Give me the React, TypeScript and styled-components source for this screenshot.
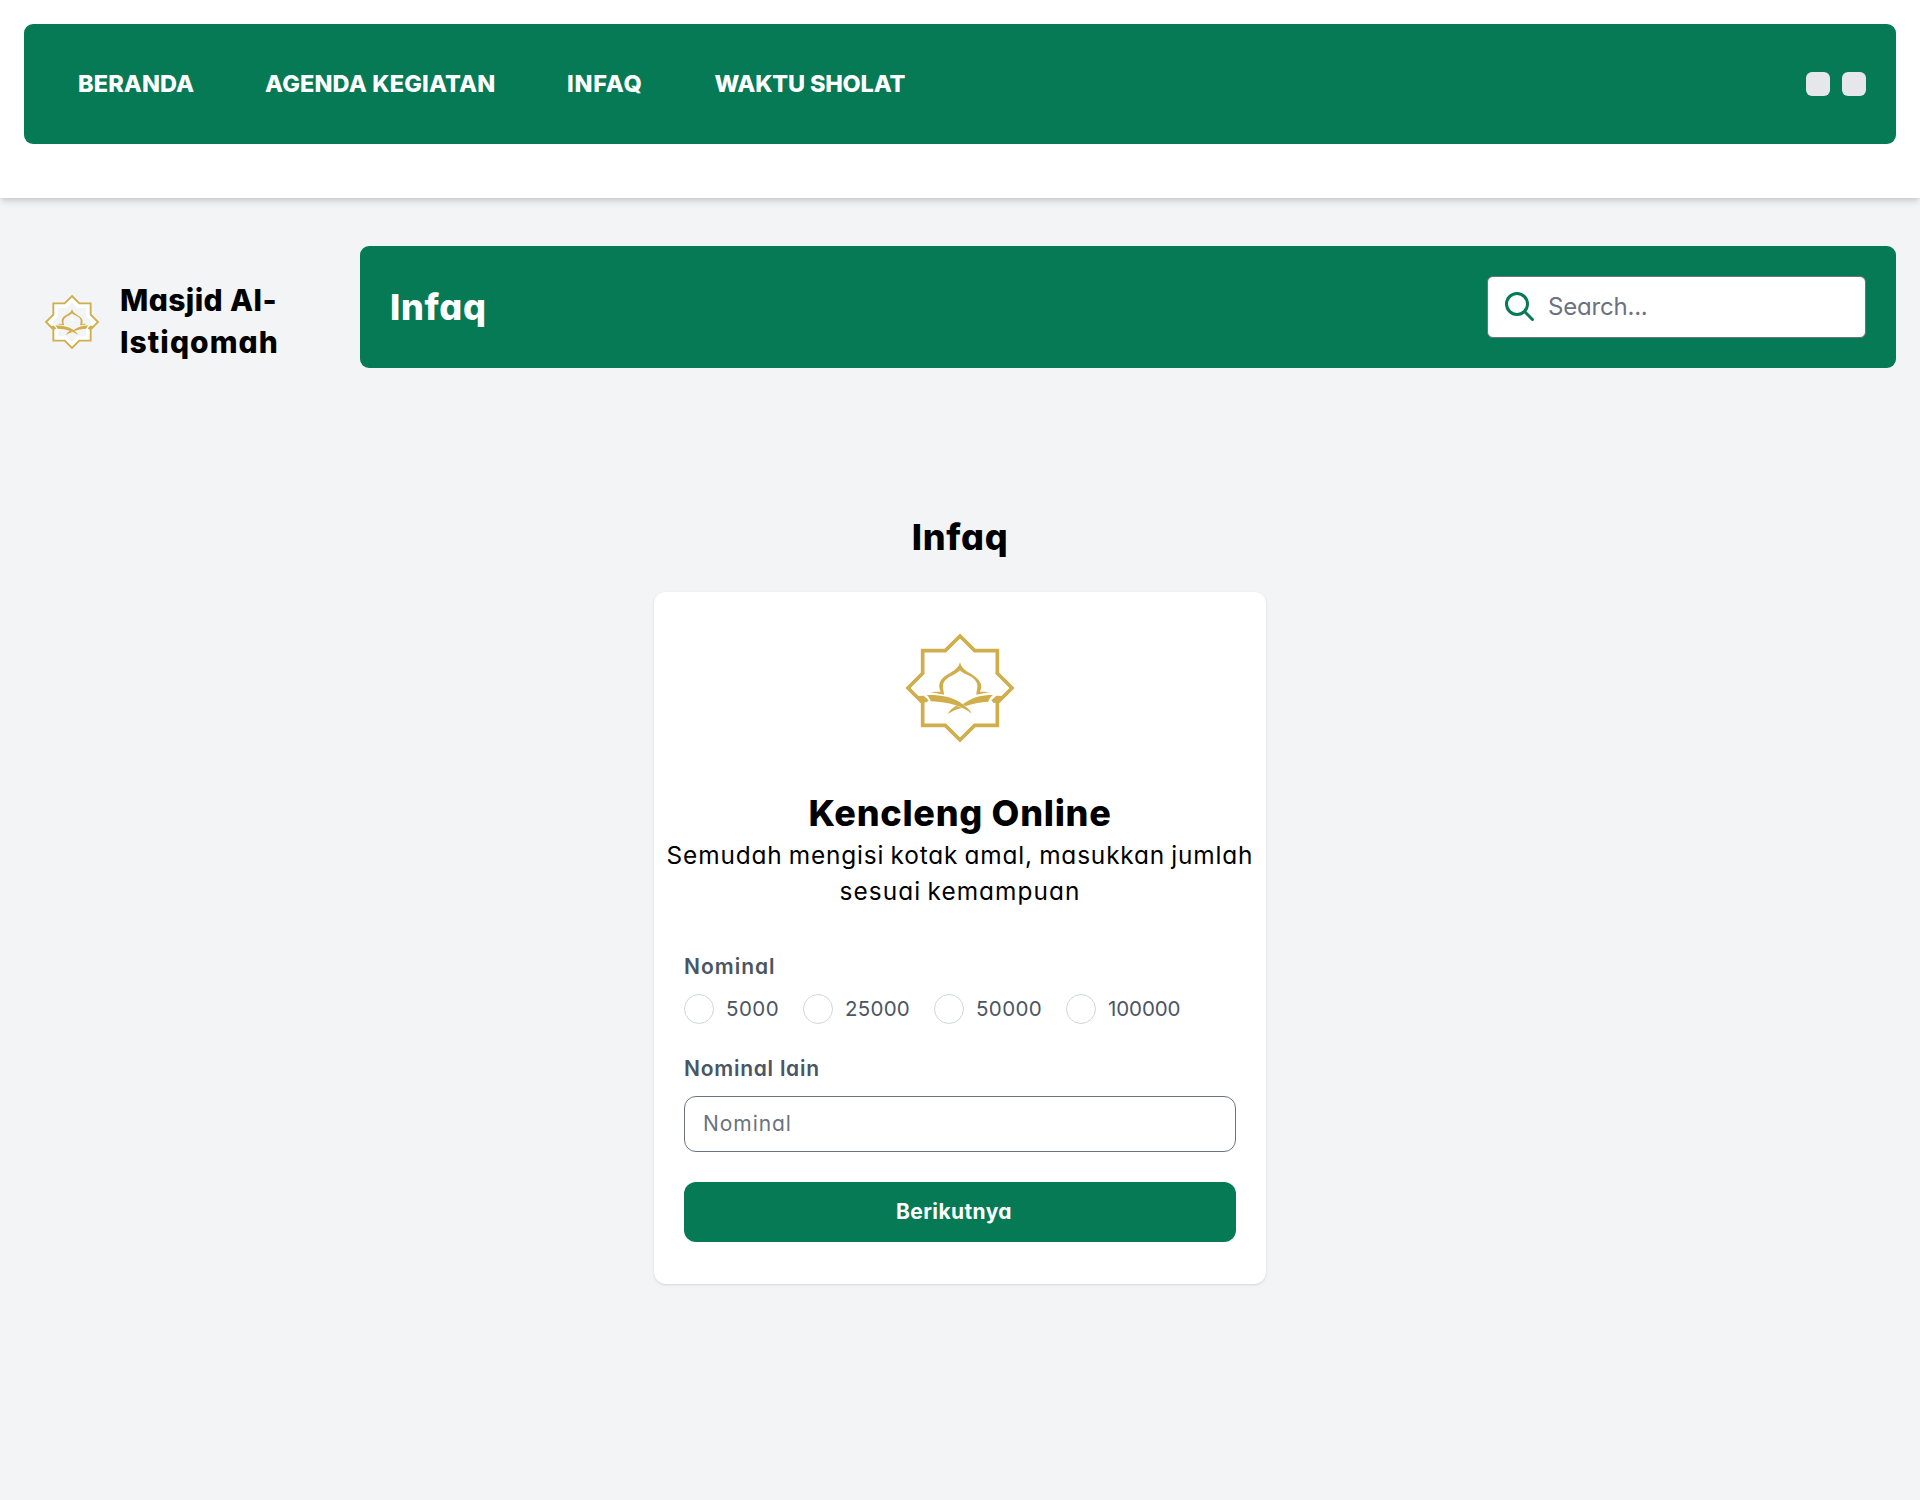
import React from "react";
import styled, { createGlobalStyle } from "styled-components";

const green = "#057a55";
const gold = "#d0ae4c";

const GlobalStyle = createGlobalStyle`
  *, *::before, *::after { box-sizing: border-box; }
  body {
    margin: 0;
    background: #f3f4f6;
    color: #000;
    font-family: Inter, "Open Sans", sans-serif;
    font-feature-settings: "cv11";
    font-size: 24px;
    line-height: 36px;
  }
  h1, h2, p { margin: 0; }
`;

const Page = styled.div`
  min-height: 1500px;
  background: #f3f4f6;
`;

const Header = styled.header`
  height: 198px;
  padding: 24px;
  background: #fff;
  box-shadow: 0 4px 6px -1px rgba(0, 0, 0, 0.1), 0 2px 4px -2px rgba(0, 0, 0, 0.1),
    0 6px 9px -1px rgba(0, 0, 0, 0.04);
`;

const NavBar = styled.nav`
  display: flex;
  align-items: center;
  justify-content: space-between;
  height: 120px;
  padding: 0 30px 0 54px;
  border-radius: 9px;
  background: ${green};
`;

const NavList = styled.div`
  display: flex;
  gap: 72px;
`;

const NavLink = styled.a<{ $width: number; $tracking: number }>`
  width: ${(p) => p.$width}px;
  color: #fff;
  font-size: 23.5px;
  font-weight: 800;
  letter-spacing: ${(p) => p.$tracking}px;
  white-space: nowrap;
`;

const Actions = styled.div`
  display: flex;
  gap: 12px;
`;

const ActionButton = styled.button`
  width: 24px;
  height: 24px;
  padding: 0;
  border: 0;
  border-radius: 6px;
  background: #e5e7eb;
`;

const TopRow = styled.div`
  display: flex;
  align-items: flex-start;
  padding: 48px 24px 0 36px;
`;

const Brand = styled.div`
  display: flex;
  align-items: center;
  gap: 12px;
  width: 324px;
  padding-top: 33px;
`;

const BrandName = styled.div`
  display: flex;
  flex-direction: column;
  padding-bottom: 2px;
  font-size: 30px;
  font-weight: 800;
  line-height: 42px;
`;

const Tracked = styled.span<{ $tracking: number }>`
  letter-spacing: ${(p) => p.$tracking}px;
  white-space: nowrap;
`;

const Lead = styled(Tracked)`
  font-size: 24.4px;
  word-spacing: -1.5px;
`;

const TitleBar = styled.div`
  display: flex;
  flex: 1;
  align-items: center;
  justify-content: space-between;
  height: 122px;
  padding: 0 30px;
  border-radius: 9px;
  background: ${green};
`;

const BarTitle = styled.h1`
  color: #fff;
  font-size: 36px;
  font-weight: 800;
  line-height: 48px;
  letter-spacing: 0.7px;
`;

const SearchBox = styled.label`
  display: flex;
  align-items: center;
  gap: 10px;
  width: 379px;
  height: 62px;
  padding: 0 14px;
  border: 1px solid #6b7280;
  border-radius: 6px;
  background: #fff;
`;

const SearchInput = styled.input`
  flex: 1;
  min-width: 0;
  padding: 0;
  border: 0;
  outline: 0;
  background: none;
  font: inherit;
  font-feature-settings: "cv11";
  letter-spacing: -0.2px;
  &::placeholder { color: #6b7280; opacity: 1; }
`;

const Main = styled.main`
  display: flex;
  flex-direction: column;
  align-items: center;
  gap: 30px;
  padding-top: 145px;
`;

const SectionTitle = styled.h2`
  font-size: 36px;
  font-weight: 800;
  line-height: 49px;
  letter-spacing: 0.7px;
`;

const Card = styled.section`
  width: 612px;
  height: 692px;
  padding-top: 24px;
  border-radius: 12px;
  background: #fff;
  box-shadow: 0 1px 3px rgba(0, 0, 0, 0.1), 0 1px 2px -1px rgba(0, 0, 0, 0.1);
`;

const Intro = styled.div`
  display: flex;
  flex-direction: column;
  align-items: center;
`;

const CardTitle = styled.h2`
  margin-top: 29px;
  font-size: 36px;
  font-weight: 800;
  line-height: 48px;
  letter-spacing: 0.72px;
`;

const Form = styled.form`
  display: flex;
  flex-direction: column;
  gap: 30px;
  padding: 43px 30px 42px;
`;

const Field = styled.div`
  display: flex;
  flex-direction: column;
  gap: 12px;
`;

const FieldLabel = styled.div<{ $tracking: number }>`
  color: #4b5563;
  font-size: 21px;
  font-weight: 600;
  line-height: 30px;
  letter-spacing: ${(p) => p.$tracking}px;
`;

const Options = styled.div`
  display: flex;
  gap: 24px;
`;

const Option = styled.label<{ $width: number; $tracking: number }>`
  display: flex;
  align-items: center;
  gap: 12px;
  width: ${(p) => p.$width}px;
  color: #4b5563;
  font-size: 20.5px;
  line-height: 30px;
  letter-spacing: ${(p) => p.$tracking}px;
  white-space: nowrap;
`;

const Radio = styled.input`
  flex: none;
  appearance: none;
  width: 30px;
  height: 30px;
  margin: 0;
  border: 1px solid #d1d5db;
  border-radius: 50%;
  background: #fff;
  &:checked { border: 9px solid ${green}; }
`;

const TextInput = styled.input`
  width: 100%;
  height: 56px;
  padding: 0 18px 1px;
  border: 1px solid #6b7280;
  border-radius: 12px;
  background: #fff;
  font: inherit;
  font-size: 21px;
  font-feature-settings: "cv11";
  letter-spacing: 0.95px;
  &::placeholder { color: #6b7280; opacity: 1; }
`;

const Submit = styled.button`
  height: 60px;
  padding: 0 12px 0 0;
  border: 0;
  border-radius: 12px;
  background: ${green};
  color: #fff;
  font: inherit;
  font-size: 21px;
  font-weight: 700;
  font-feature-settings: "cv11";
  letter-spacing: 0.4px;
`;

function Emblem({ size }: { size: number }) {
  return (
    <svg width={size} height={size} viewBox="-6 -12 432 432" fill="none">
      <path
        d="M210 72 L247 109 L305 109 L305 167 L342 204 L305 241 L305 299 L247 299 L210 336 L173 299 L115 299 L115 241 L78 204 L115 167 L115 109 L173 109 Z"
        stroke="#fff"
        strokeWidth="22"
      />
      <path
        d="M210 48 L254 92 L322 92 L322 160 L366 204 L322 248 L322 316 L254 316 L210 360 L166 316 L98 316 L98 248 L54 204 L98 160 L98 92 L166 92 Z"
        stroke={gold}
        strokeWidth="11"
      />
      <path d="M105 222 L112 222 L126 246 L112 252 Z M315 222 L308 222 L294 246 L308 252 Z" fill="#fff" />
      <g fill={gold}>
        <path d="M82 228 L101 227 L116 241 L110 247 L92 248 Z" />
        <path d="M338 228 L319 227 L304 241 L311 249 L328 248 Z" />
        <path d="M110 225 C150 224 185 230 212 248 C229 259 239 269 246 281 C216 260 180 246 122 244 C120 237 116 230 110 225 Z" />
        <path d="M309 225 C275 225 245 232 218 253 L228 258 C247 250 270 247 295 245 C297 237 302 231 309 225 Z" />
        <path d="M198 257 L216 264 C200 268 188 273 173 282 C179 271 188 263 198 257 Z" />
        <path d="M210 126 C214 143 224 150 240 160 C264 174 275 187 274 203 L270 215 C280 215 290 215 299 217 C287 218 275 222 259 224 C259 214 263 207 262 195 C260 178 241 168 226 162 C218 158 213 155 210 151 C207 155 202 158 194 163 C178 170 161 180 159 196 C158 207 162 214 162 224 C146 222 135 218 122 217 C132 215 143 215 152 215 C148 207 146 199 149 189 C153 176 164 168 180 159 C196 149 206 143 210 126 Z" />
      </g>
      <path d="M210 174 L214 182 L223 182 L217 189 L221 199 L210 194 L199 199 L203 189 L197 182 L206 182 Z" fill="#fff" />
    </svg>
  );
}

function SearchIcon() {
  return (
    <svg width="36" height="36" viewBox="0 0 24 24" fill="none" stroke={green} strokeWidth="2" strokeLinecap="round">
      <path d="M20.3 20.3L15 15m2-5a7 7 0 11-14 0 7 7 0 0114 0z" />
    </svg>
  );
}

const links = [
  { label: "BERANDA", width: 115, tracking: 0.1 },
  { label: "AGENDA KEGIATAN", width: 230, tracking: 0.15 },
  { label: "INFAQ", width: 75.5, tracking: 0.8 },
  { label: "WAKTU SHOLAT", width: 191, tracking: -0.2 },
];

const amounts = [
  { value: "5000", width: 95, tracking: 0.45 },
  { value: "25000", width: 107, tracking: 0.25 },
  { value: "50000", width: 108, tracking: 0.4 },
  { value: "100000", width: 116, tracking: -0.1 },
];

export default function App() {
  return (
    <Page>
      <GlobalStyle />
      <Header>
        <NavBar>
          <NavList>
            {links.map((l) => (
              <NavLink key={l.label} $width={l.width} $tracking={l.tracking}>
                {l.label}
              </NavLink>
            ))}
          </NavList>
          <Actions>
            <ActionButton aria-hidden />
            <ActionButton aria-hidden />
          </Actions>
        </NavBar>
      </Header>
      <TopRow>
        <Brand>
          <Emblem size={72} />
          <BrandName>
            <Tracked $tracking={0.4}>Masjid Al-</Tracked>
            <Tracked $tracking={1.05}>Istiqomah</Tracked>
          </BrandName>
        </Brand>
        <TitleBar>
          <BarTitle>Infaq</BarTitle>
          <SearchBox>
            <SearchIcon />
            <SearchInput placeholder="Search..." />
          </SearchBox>
        </TitleBar>
      </TopRow>
      <Main>
        <SectionTitle>Infaq</SectionTitle>
        <Card>
          <Intro>
            <Emblem size={144} />
            <CardTitle>Kencleng Online</CardTitle>
            <Lead $tracking={0.85}>Semudah mengisi kotak amal, masukkan jumlah</Lead>
            <Lead $tracking={1.05}>sesuai kemampuan</Lead>
          </Intro>
          <Form>
            <Field>
              <FieldLabel $tracking={1}>Nominal</FieldLabel>
              <Options>
                {amounts.map((a) => (
                  <Option key={a.value} $width={a.width} $tracking={a.tracking}>
                    <Radio type="radio" name="nominal" value={a.value} />
                    {a.value}
                  </Option>
                ))}
              </Options>
            </Field>
            <Field>
              <FieldLabel $tracking={0.75}>Nominal lain</FieldLabel>
              <TextInput placeholder="Nominal" />
            </Field>
            <Submit type="button">Berikutnya</Submit>
          </Form>
        </Card>
      </Main>
    </Page>
  );
}
